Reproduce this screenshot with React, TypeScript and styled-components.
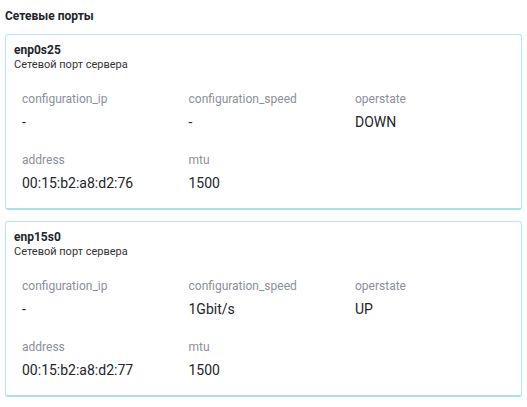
import styled, { createGlobalStyle } from "styled-components";

const GlobalStyle = createGlobalStyle`
  body {
    margin: 0;
    background: #ffffff;
    font-family: Roboto, "Liberation Sans", sans-serif;
    color: #222529;
  }
`;

const Page = styled.main`
  padding: 8px 5px;
  display: flex;
  flex-direction: column;
`;

const Title = styled.h4`
  margin: 0 0 10px;
  font-size: 12px;
  line-height: 16px;
  font-weight: 700;
  color: #222529;
`;

const CardList = styled.div`
  display: flex;
  flex-direction: column;
  gap: 11px;
`;

const Card = styled.section`
  border: 1px solid #b4eaee;
  border-bottom: 2px solid #a6e4e9;
  border-radius: 3px;
  padding: 8px 8px 15px;
  background: #fff;
`;

const PortName = styled.h5`
  margin: 0;
  font-size: 12px;
  line-height: 15px;
  font-weight: 700;
  color: #222529;
`;

const PortDescription = styled.div`
  font-size: 11px;
  line-height: 14px;
  color: #333;
`;

const FieldsGrid = styled.div`
  margin-top: 19px;
  padding-left: 8px;
  display: grid;
  grid-template-columns: repeat(3, 166.5px);
  row-gap: 20px;
`;

const Field = styled.div`
  display: flex;
  flex-direction: column;
  gap: 5px;
`;

const FieldLabel = styled.span`
  font-size: 12px;
  line-height: 16px;
  color: #8b9099;
`;

const FieldValue = styled.span`
  font-size: 14px;
  line-height: 20px;
  color: #222529;
`;

type Port = {
  name: string;
  fields: [string, string][];
};

const ports: Port[] = [
  {
    name: "enp0s25",
    fields: [
      ["configuration_ip", "-"],
      ["configuration_speed", "-"],
      ["operstate", "DOWN"],
      ["address", "00:15:b2:a8:d2:76"],
      ["mtu", "1500"],
    ],
  },
  {
    name: "enp15s0",
    fields: [
      ["configuration_ip", "-"],
      ["configuration_speed", "1Gbit/s"],
      ["operstate", "UP"],
      ["address", "00:15:b2:a8:d2:77"],
      ["mtu", "1500"],
    ],
  },
];

export default function App() {
  return (
    <>
      <GlobalStyle />
      <Page>
        <Title>Сетевые порты</Title>
        <CardList>
          {ports.map((port) => (
            <Card key={port.name}>
              <PortName>{port.name}</PortName>
              <PortDescription>Сетевой порт сервера</PortDescription>
              <FieldsGrid>
                {port.fields.map(([label, value]) => (
                  <Field key={label}>
                    <FieldLabel>{label}</FieldLabel>
                    <FieldValue>{value}</FieldValue>
                  </Field>
                ))}
              </FieldsGrid>
            </Card>
          ))}
        </CardList>
      </Page>
    </>
  );
}
